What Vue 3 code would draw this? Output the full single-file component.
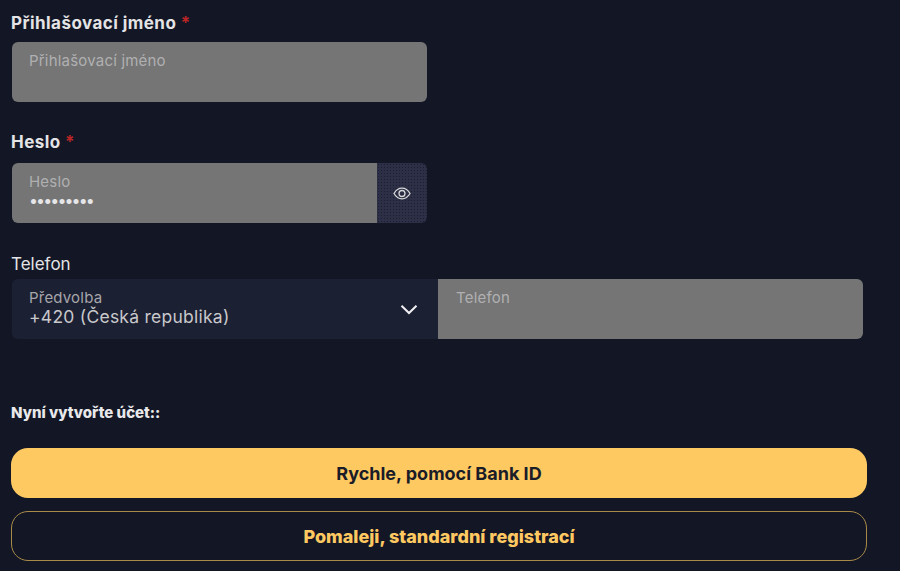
<script setup>
const dots = '•••••••••'
</script>

<template>
  <main class="page">
    <section class="field first">
      <label class="label strong">Přihlašovací jméno <span class="req">*</span></label>
      <div class="box narrow grey round">
        <span class="hint">Přihlašovací jméno</span>
      </div>
    </section>

    <section class="field second">
      <label class="label strong">Heslo <span class="req">*</span></label>
      <div class="row narrow">
        <div class="box grey round-left grow">
          <span class="hint">Heslo</span>
          <span class="dots">{{ dots }}</span>
        </div>
        <button class="eye" type="button" aria-label="Zobrazit heslo">
          <svg width="18" height="13" viewBox="0 0 18 13" fill="none" stroke="#d8d8da" stroke-width="1.3">
            <path d="M1 6.5C3 3 5.7 1.2 9 1.2S15 3 17 6.5C15 10 12.3 11.8 9 11.8S3 10 1 6.5Z" />
            <circle cx="9" cy="6.5" r="3" />
          </svg>
        </button>
      </div>
    </section>

    <section class="field third">
      <label class="label">Telefon</label>
      <div class="row wide">
        <div class="box select">
          <span class="hint muted">Předvolba</span>
          <span class="value">+420 (Česká republika)</span>
          <svg class="chev" width="18" height="11" viewBox="0 0 18 11" fill="none" stroke="#f0f0f2" stroke-width="2">
            <path d="M1.5 1.8 9 9l7.5-7.2" />
          </svg>
        </div>
        <div class="box grey round-right grow phone">
          <span class="hint">Telefon</span>
        </div>
      </div>
    </section>

    <p class="now">Nyní vytvořte účet::</p>

    <div class="actions">
      <button class="btn primary" type="button">Rychle, pomocí Bank ID</button>
      <button class="btn outline" type="button">Pomaleji, standardní registrací</button>
    </div>
  </main>
</template>

<style>
html, body { margin: 0; background: #131725; }
</style>

<style scoped>
.page {
  width: 900px;
  height: 571px;
  box-sizing: border-box;
  padding: 14px 33px 0 11px;
  background: #131725;
  color: #e9e9eb;
  font-family: Inter, "Liberation Sans", sans-serif;
  overflow: hidden;
}
.field { display: flex; flex-direction: column; }
.first { gap: 9px; }
.second { gap: 11px; margin-top: 31px; }
.third { gap: 5px; margin-top: 32px; }
.label {
  display: block;
  font-size: 17px;
  line-height: 19px;
  font-weight: 400;
  color: #e4e4e6;
}
.strong { font-weight: 700; letter-spacing: 0.45px; }
.req { color: #b92525; font-weight: 700; }
.box {
  height: 60px;
  box-sizing: border-box;
  padding: 10px 17px 0;
  display: flex;
  flex-direction: column;
  position: relative;
}
.narrow { width: 415px; margin-left: 1px; }
.wide { width: 851px; margin-left: 1px; }
.row { display: flex; }
.grow { flex: 1; }
.grey { background: #757575; }
.round { border-radius: 6px; }
.round-left { border-radius: 6px 0 0 6px; }
.round-right { border-radius: 0 6px 6px 0; }
.hint {
  font-size: 15px;
  line-height: 18px;
  letter-spacing: 0.2px;
  color: #b0b0b2;
}
.muted { color: #a6a6aa; }
.dots {
  font-size: 16px;
  line-height: 18px;
  letter-spacing: -1.9px;
  color: #e6e6e8;
}
.eye {
  width: 50px;
  height: 60px;
  padding: 0 1px 0 0;
  border: 0;
  border-radius: 0 6px 6px 0;
  display: flex;
  align-items: center;
  justify-content: center;
  background-color: #2c2f45;
  background-image: radial-gradient(#1b1e2e 0.6px, transparent 0.8px);
  background-size: 3px 3px;
}
.select {
  width: 426px;
  flex: none;
  background: #1c2033;
  border-radius: 6px 0 0 6px;
}
.phone { padding-left: 18px; padding-right: 18px; }
.value {
  font-size: 17.5px;
  line-height: 22px;
  margin-top: -1px;
  color: #c9c9cc;
  letter-spacing: 0.25px;
}
.chev { position: absolute; right: 20px; top: 25px; }
.now {
  margin: 65px 0 0;
  font-size: 15px;
  line-height: 18px;
  font-weight: 800;
  color: #e9e9eb;
}
.actions {
  margin-top: 26px;
  display: flex;
  flex-direction: column;
  gap: 13px;
  width: 856px;
}
.btn {
  height: 50px;
  border-radius: 17px;
  box-sizing: border-box;
  font-family: inherit;
  font-size: 18px;
  font-weight: 700;
  cursor: pointer;
}
.primary { background: #ffc962; border: 0; color: #1a1c28; }
.outline { background: transparent; border: 1px solid #a98a49; color: #ffc962; font-weight: 800; }
</style>
